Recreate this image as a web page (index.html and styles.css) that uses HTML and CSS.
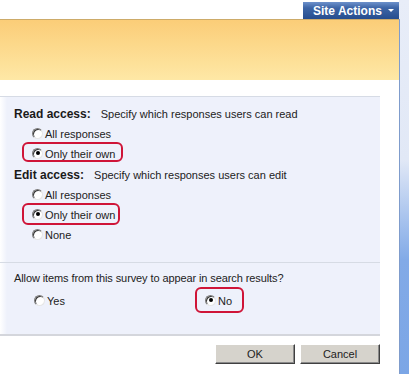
FILE: index.html
```html
<!DOCTYPE html>
<html lang="en">

<head>
    <meta charset="UTF-8">
    <title>Survey Settings</title>
    <link rel="stylesheet" href="styles.css">
</head>

<body>

    <div class="page">
        <div class="main">
            <div class="topbar">
                <div class="site-actions">Site Actions <span class="arrow"></span></div>
            </div>
            <div class="banner"></div>

            <div class="form-area">
                <div class="section section-access">
                    <div class="label-row"><b>Read access:</b><span class="desc">Specify which responses users can read</span></div>
                    <div class="options">
                        <div class="option"><span class="radio"></span>All responses</div>
                        <div class="option"><span class="mark"><span class="radio checked"></span>Only their own</span></div>
                    </div>

                    <div class="label-row"><b>Edit access:</b><span class="desc">Specify which responses users can edit</span></div>
                    <div class="options">
                        <div class="option"><span class="radio"></span>All responses</div>
                        <div class="option"><span class="mark mark-edit"><span class="radio checked"></span>Only their own</span></div>
                        <div class="option"><span class="radio"></span>None</div>
                    </div>
                </div>

                <div class="section section-search">
                    <div class="label-row question">Allow items from this survey to appear in search results?</div>
                    <div class="option-pair">
                        <div class="option option-yes"><span class="radio"></span>Yes</div>
                        <div class="option"><span class="mark mark-no"><span class="radio checked"></span>No</span></div>
                    </div>
                </div>
            </div>

            <div class="buttons">
                <button type="button">OK</button>
                <button type="button">Cancel</button>
            </div>
        </div>
        <div class="edge"></div>
    </div>

</body>

</html>
```

FILE: styles.css
```css
body {
    margin: 0;
    padding: 0;
    background-color: #fff;
    font-family: "Liberation Sans", Arial, sans-serif;
    font-size: 11px;
    color: #222;
}

.page {
    display: flex;
    height: 374px;
    overflow: hidden;
}

.main {
    width: 399px;
}

.edge {
    width: 10px;
    background:
        linear-gradient(#7f9ccc, #7f9ccc) 0 19px / 1px 100% no-repeat,
        linear-gradient(to bottom, #e8edf8 0, #e1e8f6 160px, #9dbcec 230px, #82aae7 260px, #7ba6e6 100%);
}

/* top strip with the menu button */
.topbar {
    height: 19px;
    display: flex;
    justify-content: flex-end;
}

.site-actions {
    width: 96px;
    height: 17px;
    margin-top: 2px;
    box-sizing: border-box;
    padding-left: 10px;
    display: flex;
    align-items: center;
    background: linear-gradient(to bottom, #6d91cb 0, #3d65a6 35%, #264d8e 100%);
    color: #fff;
    font-size: 12px;
    font-weight: bold;
}

.arrow {
    margin-left: 6px;
    border-left: 3px solid transparent;
    border-right: 3px solid transparent;
    border-top: 3px solid #fff;
}

.banner {
    height: 60px;
    border-top: 1px solid #cdab69;
    background: linear-gradient(to bottom, #fbcd78 0, #fcd88a 40%, #fee8a6 100%);
}

/* form sections */
.form-area {
    width: 380px;
    margin-top: 16px;
    border-top: 1px solid #d6dbe5;
    border-bottom: 2px solid #d4d6dc;
}

.section {
    background: linear-gradient(to right, #fff 0, #eef1fb 7px);
}

.section-access {
    padding: 6px 0 17px;
    border-bottom: 1px solid #d6dbe4;
}

.section-search {
    padding: 4px 0 23px;
}

.label-row {
    height: 21px;
    display: flex;
    align-items: center;
    padding-left: 14px;
}

.label-row b {
    font-size: 12px;
    color: #1a1a1a;
}

.desc {
    margin-left: 10px;
}

.question {
    letter-spacing: -0.1px;
}

.options {
    padding-left: 32px;
}

.option {
    height: 20px;
    display: flex;
    align-items: center;
}

.option-pair {
    display: flex;
    padding-left: 34px;
    margin-top: 3px;
}

.option-yes {
    width: 171px;
}

.radio {
    width: 11px;
    height: 11px;
    box-sizing: border-box;
    margin-right: 2px;
    margin-top: -2px;
    border-radius: 50%;
    border: 1px solid;
    border-color: #7c7c7c #e6e6e6 #e6e6e6 #7c7c7c;
    background-color: #fff;
    box-shadow: inset 1px 1px 0 #3a3a3a;
    display: flex;
    justify-content: center;
    align-items: center;
}

.radio.checked::after {
    content: "";
    width: 4px;
    height: 4px;
    border-radius: 50%;
    background-color: #000;
}

/* red highlight drawn over the chosen answers */
.mark {
    position: relative;
    align-self: stretch;
    display: flex;
    align-items: center;
}

.mark::before {
    content: "";
    position: absolute;
    left: -10px;
    right: -8px;
    top: -2px;
    bottom: 2px;
    border: 2px solid #cf1538;
    border-radius: 6px;
}

.mark-edit::before {
    top: -2px;
    bottom: 0;
    right: -5px;
}

.mark-no::before {
    top: -4px;
    bottom: -2px;
    right: -12px;
}

.buttons {
    width: 380px;
    display: flex;
    justify-content: flex-end;
    gap: 5px;
    margin-top: 8px;
}

button {
    width: 80px;
    height: 20px;
    padding: 0;
    font-family: "Liberation Sans", Arial, sans-serif;
    font-size: 11px;
    color: #222;
    background-color: #d6d3cc;
    border: 1px solid;
    border-color: #fff #404040 #404040 #fff;
    box-shadow: inset -1px -1px 0 #8a8a8a;
}
```
